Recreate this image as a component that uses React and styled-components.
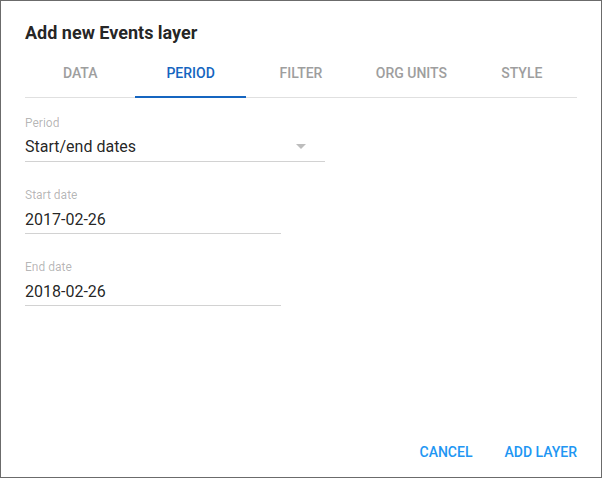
import React from "react";
import styled, { createGlobalStyle } from "styled-components";

const Global = createGlobalStyle`
  html, body { margin: 0; padding: 0; background: #fff; }
  body { font-family: Roboto, "Noto Sans", sans-serif; }
  * { box-sizing: border-box; }
`;

const Dialog = styled.div`
  width: 602px;
  height: 478px;
  border: 1px solid #6b6b6b;
  background: #fff;
  display: flex;
  flex-direction: column;
`;

const Title = styled.h3`
  margin: 0;
  padding: 20px 24px 0;
  font-size: 18px;
  line-height: 24px;
  font-weight: 700;
  color: rgba(0, 0, 0, 0.87);
`;

const Body = styled.div`
  flex: 1;
  padding: 4px 24px 0;
`;

const TabBar = styled.div`
  display: grid;
  grid-template-columns: repeat(5, 1fr);
  border-bottom: 1px solid #e0e0e0;
`;

const Tab = styled.div`
  position: relative;
  height: 48px;
  line-height: 48px;
  text-align: center;
  font-size: 14px;
  font-weight: 500;
  text-transform: uppercase;
  color: ${(p) => (p.$active ? "#1565c0" : "#9e9e9e")};
`;

const Indicator = styled.span`
  position: absolute;
  left: 0;
  right: 0;
  bottom: -1px;
  height: 2px;
  background: #1565c0;
`;

const Fields = styled.div`
  display: flex;
  flex-direction: column;
  gap: 25px;
  padding-top: 17px;
`;

const Field = styled.div`
  width: ${(p) => p.$width}px;
  border-bottom: 1px solid #d2d2d2;
  padding-bottom: ${(p) => (p.$select ? 2 : 1)}px;
  position: relative;
`;

const Label = styled.div`
  font-size: 12px;
  line-height: 16px;
  color: rgba(0, 0, 0, 0.3);
`;

const Value = styled.div`
  margin-top: ${(p) => (p.$select ? 4 : 5)}px;
  font-size: 16px;
  line-height: 24px;
  color: rgba(0, 0, 0, 0.87);
  display: flex;
  align-items: center;
  justify-content: space-between;
`;

const Arrow = styled.span`
  width: 0;
  height: 0;
  margin-right: 19px;
  margin-top: -2px;
  border-left: 5px solid transparent;
  border-right: 5px solid transparent;
  border-top: 5px solid #bdbdbd;
`;

const Actions = styled.div`
  display: flex;
  justify-content: flex-end;
  padding: 0 8px 7px;
`;

const Button = styled.button`
  height: 36px;
  min-width: 64px;
  padding: 0 16px;
  border: none;
  background: transparent;
  font-family: Roboto, "Noto Sans", sans-serif;
  font-size: 14px;
  font-weight: 500;
  text-transform: uppercase;
  color: #2196f3;
  cursor: pointer;
`;

const tabs = ["Data", "Period", "Filter", "Org units", "Style"];

export default function App() {
  return (
    <>
      <Global />
      <Dialog>
        <Title>Add new Events layer</Title>
        <Body>
          <TabBar>
            {tabs.map((t) => (
              <Tab key={t} $active={t === "Period"}>
                {t}
                {t === "Period" && <Indicator />}
              </Tab>
            ))}
          </TabBar>
          <Fields>
            <Field $width={300} $select>
              <Label>Period</Label>
              <Value $select>
                Start/end dates
                <Arrow />
              </Value>
            </Field>
            <Field $width={256}>
              <Label>Start date</Label>
              <Value>2017-02-26</Value>
            </Field>
            <Field $width={256}>
              <Label>End date</Label>
              <Value>2018-02-26</Value>
            </Field>
          </Fields>
        </Body>
        <Actions>
          <Button>Cancel</Button>
          <Button>Add layer</Button>
        </Actions>
      </Dialog>
    </>
  );
}
